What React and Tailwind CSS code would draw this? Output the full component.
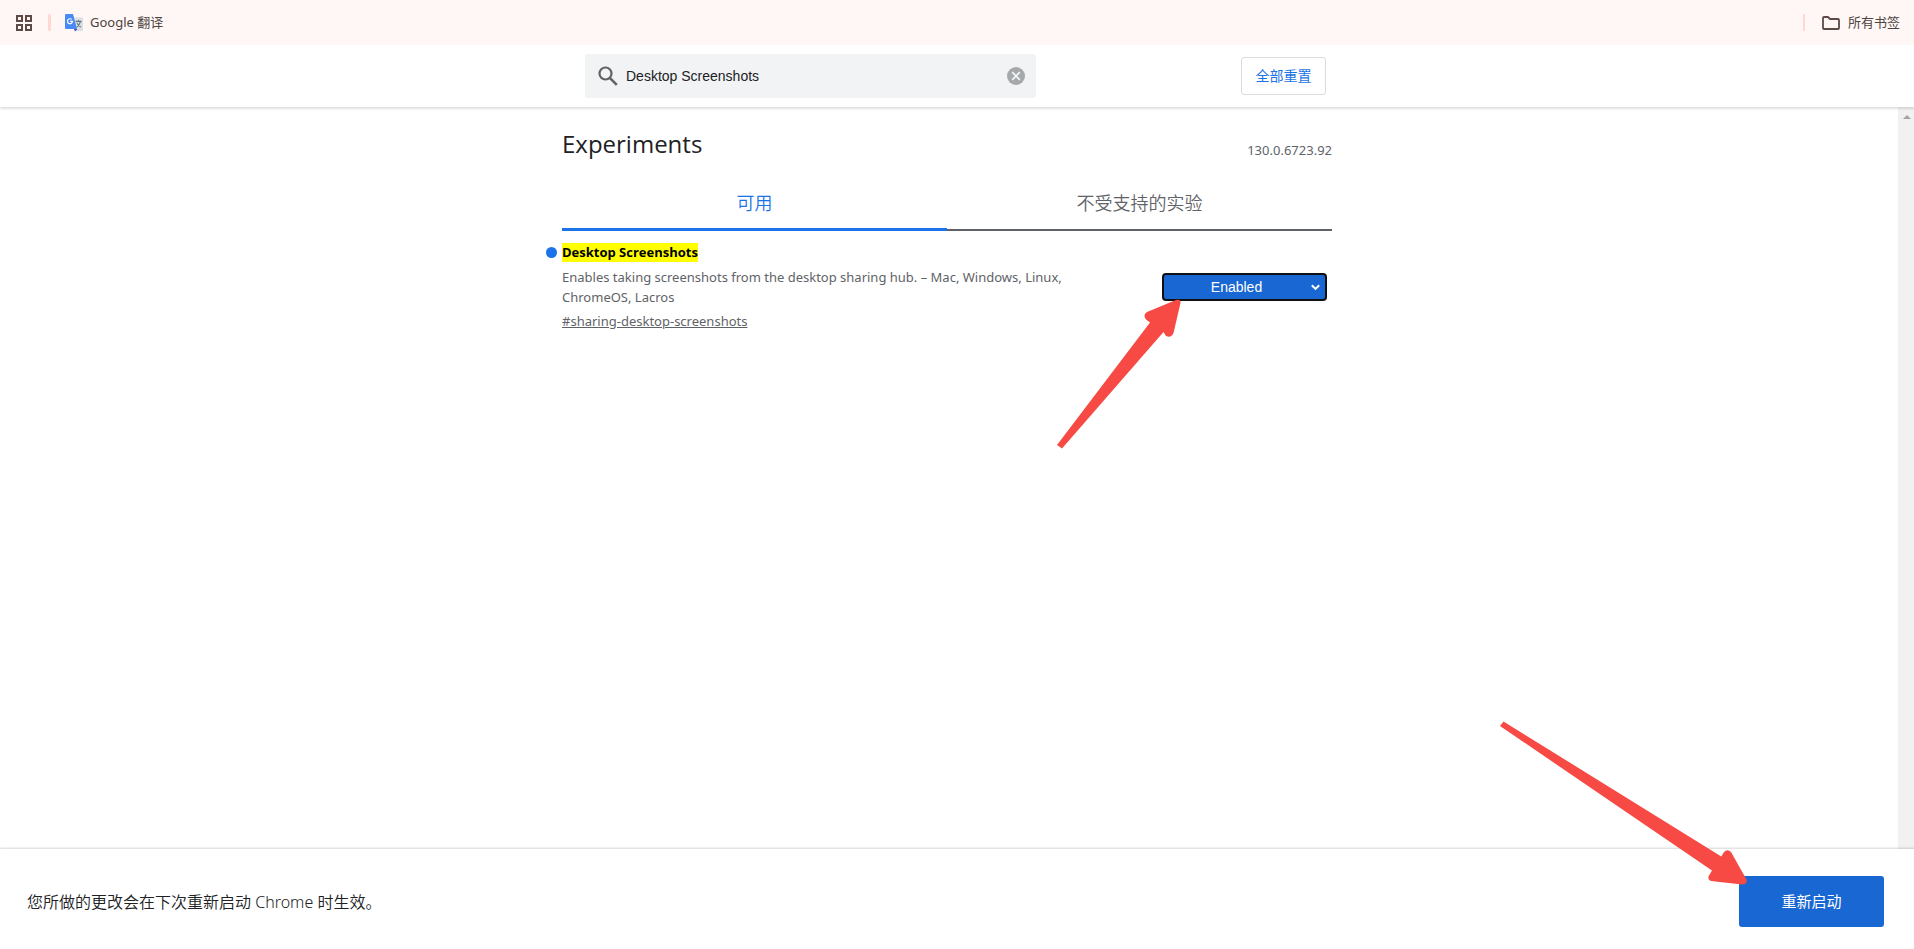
import React, { useState } from "react";

function AppsIcon() {
  return (
    <svg width="16" height="16" viewBox="0 0 16 16" fill="none" stroke="#5b4a45" strokeWidth="2" aria-hidden="true">
      <rect x="1" y="1" width="5" height="5" />
      <rect x="10" y="1" width="5" height="5" />
      <rect x="1" y="10" width="5" height="5" />
      <rect x="10" y="10" width="5" height="5" />
    </svg>
  );
}

function TranslateIcon() {
  return (
    <svg width="18" height="18" viewBox="0 0 18 18" aria-hidden="true">
      <path d="M7 3.5h10a1 1 0 0 1 1 1V16a1 1 0 0 1-1 1h-6z" fill="#dcdfe0" />
      <path d="M10.6 7.4h6M13.6 6v1.4M15.6 7.4c-.6 2.4-2 4.200-4 5.600M11.800 8.600c.8 2 2.200 3.500 4.200 4.500" fill="none" stroke="#607988" strokeWidth="1.100" />
      <path d="M9 15h3.500l-2.500 2.600z" fill="#3a52c4" />
      <path d="M1 0h7l4 15H1a1 1 0 0 1-1-1V1a1 1 0 0 1 1-1z" fill="#4a8af4" />
      <path d="M6.700 5.400A2.500 2.500 0 1 0 7.500 7.300H5.100" fill="none" stroke="#fff" strokeWidth="1.200" />
    </svg>
  );
}

function FolderIcon() {
  return (
    <svg width="18" height="14" viewBox="0 0 18 14" fill="none" stroke="#5b4a45" strokeWidth="1.800" strokeLinejoin="round" aria-hidden="true">
      <path d="M1 2a1 1 0 0 1 1-1h4l2 2H16a1 1 0 0 1 1 1v8a1 1 0 0 1-1 1H2a1 1 0 0 1-1-1z" />
    </svg>
  );
}

function SearchIcon() {
  return (
    <svg width="20" height="20" viewBox="0 0 20 20" fill="none" stroke="#5f6368" aria-hidden="true">
      <circle cx="7.500" cy="7.500" r="6" strokeWidth="2.200" />
      <path d="M11.800 11.800l7 7" strokeWidth="2.600" />
    </svg>
  );
}

function ClearIcon() {
  return (
    <svg width="18" height="18" viewBox="0 0 18 18" aria-hidden="true">
      <circle cx="9" cy="9" r="9" fill="#a6a9ab" />
      <path d="M5.200 5.200l7.600 7.600M12.800 5.200l-7.600 7.600" stroke="#f1f3f4" strokeWidth="1.800" />
    </svg>
  );
}

// hand-drawn style pointers laid over the controls
function SelectArrow() {
  return (
    <svg className="pointer-events-none absolute top-[17px] -left-28" width="140" height="160" viewBox="0 0 140 160" fill="#f74a45" aria-hidden="true">
      <path d="M7 155L100 32.500L96 29.500Q92.500 25 97 22L126 10Q131 9 130.500 13L123.500 43Q121 48.500 116 46L113.500 42L12 158.500Z" />
    </svg>
  );
}

function RestartArrow() {
  return (
    <svg className="pointer-events-none absolute -top-40 -left-60" width="250" height="170" viewBox="0 0 250 170" fill="#f74a45" aria-hidden="true">
      <path d="M1 10L4.500 5.500L222.300 140.500L225 136Q228.500 132.500 232 136L247.500 163.500Q249 168 243 168.500L212 165Q208 163.500 210 159.500L213 154.500Z" />
    </svg>
  );
}

function BookmarksBar() {
  return (
    <nav className="flex h-[45px] items-center bg-[#fff7f5] pr-[14px] pl-4 text-[13px] text-[#4d4340]">
      <button aria-label="Apps"><AppsIcon /></button>
      <span className="ml-4 h-[17px] w-[3px] rounded-full bg-[#ffd9d0]" />
      <a href="#translate" className="ml-[14px] flex items-center gap-[7px]">
        <TranslateIcon />
        Google 翻译
      </a>
      <span className="ml-auto h-[17px] w-[2px] bg-[#ffd9d0]" />
      <button className="ml-[17px] flex items-center gap-2">
        <FolderIcon />
        所有书签
      </button>
    </nav>
  );
}

function Header({ query, setQuery, onReset }) {
  return (
    <header className="relative z-10 bg-white py-[9px] pr-9 pl-4 shadow-[0_2px_2px_0_rgba(0,0,0,0.12)]">
      <div className="mx-auto flex w-full max-w-[770px] items-center justify-between pr-[6px] pl-[23px]">
        <div className="flex h-11 w-[451px] items-center rounded-[3px] bg-[#f1f3f4] pr-[11px] pl-[13px]">
          <label htmlFor="search"><SearchIcon /></label>
          <input
            id="search"
            aria-label="Search flags"
            value={query}
            onChange={(e) => setQuery(e.target.value)}
            className="ml-2 min-w-0 flex-1 bg-transparent font-['Liberation_Sans',sans-serif] text-sm text-[#202124] outline-none"
          />
          <button aria-label="Clear search" onClick={() => setQuery("")}><ClearIcon /></button>
        </div>
        <button onClick={onReset} className="h-[38px] w-[85px] rounded-[3px] border border-[#dadce0] text-sm text-[#1a73e8]">
          全部重置
        </button>
      </div>
    </header>
  );
}

function Experiment({ value, onChange }) {
  return (
    <section className="flex items-start justify-between pt-3 pr-[5px]">
      <div className="w-[540px] text-[13px] leading-5 text-[#5f6368]">
        <h2 className="relative font-['Open_Sans',sans-serif] leading-[19px] font-bold text-black">
          <span className="absolute top-1 -left-4 size-[11px] rounded-full bg-[#1a73e8]" />
          <label htmlFor="sharing" className="inline-block bg-[#ffff00]">Desktop Screenshots</label>
        </h2>
        <p className="mt-[5px]">
          Enables taking screenshots from the desktop sharing hub. – Mac, Windows, Linux, ChromeOS, Lacros
        </p>
        <a href="#sharing-desktop-screenshots" className="mt-1 inline-block underline">#sharing-desktop-screenshots</a>
      </div>
      <div className="relative mt-[30px]">
        <select
          id="sharing"
          value={value}
          onChange={(e) => onChange(e.target.value)}
          className="block h-7 w-[165px] appearance-none rounded-[4px] border-2 border-[#101010] bg-[#1967d2] pr-4 text-center font-['Liberation_Sans',sans-serif] text-sm text-white [text-align-last:center]"
        >
          <option>Default</option>
          <option>Enabled</option>
          <option>Disabled</option>
        </select>
        <svg className="pointer-events-none absolute top-[11px] right-[7px]" width="9" height="7" viewBox="0 0 9 7" fill="none" stroke="#fff" strokeWidth="2" aria-hidden="true">
          <path d="M.8 1.200L4.500 4.900L8.200 1.200" />
        </svg>
        <SelectArrow />
      </div>
    </section>
  );
}

export default function App() {
  const [query, setQuery] = useState("Desktop Screenshots");
  const [value, setValue] = useState("Enabled");
  const [tab, setTab] = useState("available");

  return (
    <div className="flex min-h-screen flex-col bg-white font-['Noto_Sans','Noto_Sans_CJK_SC',sans-serif] text-[#202124]">
      <BookmarksBar />
      <Header query={query} setQuery={setQuery} onReset={() => setValue("Default")} />

      <div className="flex flex-1">
        <main className="flex-1 pr-5 pl-4">
          <div className="mx-auto max-w-[770px]">
            <div className="flex items-end justify-between pt-[21px]">
              <h1 className="font-['Open_Sans',sans-serif] text-2xl leading-8">Experiments</h1>
              <span className="text-[13px] leading-5 text-[#5f6368]">130.0.6723.92</span>
            </div>
            <div role="tablist" className="mt-[19px] flex text-lg font-[350]">
              <button
                role="tab"
                aria-selected={tab === "available"}
                onClick={() => setTab("available")}
                className="h-[52px] flex-1 border-b-[3px] border-[#1a73e8] pb-[2px] text-[#1a73e8]"
              >
                可用
              </button>
              <button
                role="tab"
                aria-selected={tab === "unavailable"}
                onClick={() => setTab("unavailable")}
                className="h-[52px] flex-1 border-b-2 border-[#5f6368] pb-[2px] text-[#5f6368]"
              >
                不受支持的实验
              </button>
            </div>
            <Experiment value={value} onChange={setValue} />
          </div>
        </main>
        <div className="flex w-4 justify-center bg-[#f1f1f1] pt-2 pl-[2px]">
          <svg width="8" height="4" viewBox="0 0 8 4" fill="#a3a3a3" aria-hidden="true">
            <path d="M4 0l4 4H0z" />
          </svg>
        </div>
      </div>

      <footer className="relative flex h-[100px] items-center justify-between bg-white pt-[5px] pr-[30px] pl-[27px] shadow-[0_-1px_2px_0_rgba(0,0,0,0.16)]">
        <p className="text-base font-[350]">您所做的更改会在下次重新启动 Chrome 时生效。</p>
        <div className="relative">
          <button className="h-[51px] w-[145px] rounded-[3px] bg-[#1967d2] text-[15px] text-white">重新启动</button>
          <RestartArrow />
        </div>
      </footer>
    </div>
  );
}
